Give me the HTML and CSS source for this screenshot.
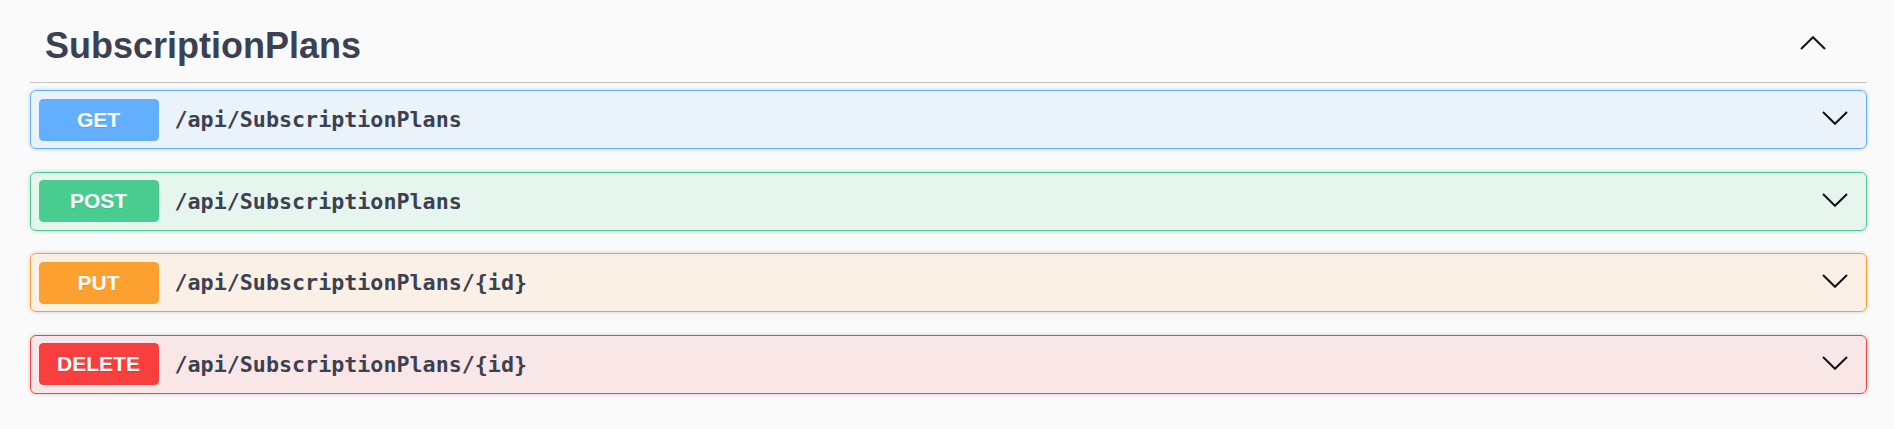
FILE: index.html
```html
<!DOCTYPE html>
<html lang="en">
<head>
<meta charset="utf-8">
<title>SubscriptionPlans</title>
<link rel="stylesheet" href="styles.css">
</head>
<body>
<div class="wrapper">
  <section class="tag-section">
    <div class="tag-header">
      <h4 class="tag-title">SubscriptionPlans</h4>
      <button class="tag-toggle" aria-label="Collapse">
        <svg class="chev" width="26" height="14" viewBox="0 0 26 14"><polyline points="1,13 13,1.2 25,13" fill="none" stroke="#111" stroke-width="2"/></svg>
      </button>
    </div>
    <div class="ops">
      <div class="op op-get">
        <span class="method">GET</span>
        <span class="path">/api/SubscriptionPlans</span>
        <svg class="chev op-chev" width="26" height="14" viewBox="0 0 26 14"><polyline points="1,1 13,12.8 25,1" fill="none" stroke="#111" stroke-width="2"/></svg>
      </div>
      <div class="op op-post">
        <span class="method">POST</span>
        <span class="path">/api/SubscriptionPlans</span>
        <svg class="chev op-chev" width="26" height="14" viewBox="0 0 26 14"><polyline points="1,1 13,12.8 25,1" fill="none" stroke="#111" stroke-width="2"/></svg>
      </div>
      <div class="op op-put">
        <span class="method">PUT</span>
        <span class="path">/api/SubscriptionPlans/{id}</span>
        <svg class="chev op-chev" width="26" height="14" viewBox="0 0 26 14"><polyline points="1,1 13,12.8 25,1" fill="none" stroke="#111" stroke-width="2"/></svg>
      </div>
      <div class="op op-delete">
        <span class="method">DELETE</span>
        <span class="path">/api/SubscriptionPlans/{id}</span>
        <svg class="chev op-chev" width="26" height="14" viewBox="0 0 26 14"><polyline points="1,1 13,12.8 25,1" fill="none" stroke="#111" stroke-width="2"/></svg>
      </div>
    </div>
  </section>
</div>
</body>
</html>
```
FILE: styles.css
```css
html, body {
  margin: 0;
  padding: 0;
  background: #fafafa;
}

.wrapper {
  padding: 9.5px 27px 0 30px;
  font-family: "Liberation Sans", Arial, sans-serif;
}

.tag-header {
  display: flex;
  align-items: center;
  padding: 15px 41px 15px 15px;
  border-bottom: 1px solid rgba(59, 65, 81, 0.3);
}

.tag-title {
  flex: 1;
  margin: 0;
  font-size: 36px;
  line-height: 42px;
  font-weight: bold;
  color: #3b4151;
}

.tag-toggle {
  background: none;
  border: 0;
  padding: 0;
  margin: 0 0 6px 0;
  display: flex;
  cursor: pointer;
}

.chev {
  display: block;
}

.ops {
  padding-top: 7.5px;
}

.op {
  display: flex;
  align-items: center;
  padding: 7.5px 7.5px;
  border: 1px solid;
  border-radius: 6px;
  margin-bottom: 22.5px;
  box-shadow: 0 0 4.5px rgba(0, 0, 0, 0.19);
}

.method {
  min-width: 120px;
  height: 42px;
  display: flex;
  align-items: center;
  justify-content: center;
  border-radius: 4.5px;
  color: #fff;
  font-size: 21px;
  font-weight: bold;
  text-shadow: 0 1px 0 rgba(0, 0, 0, 0.1);
}

.path {
  flex: 1;
  padding: 0 15px 0 16px;
  font-family: "DejaVu Sans Mono", "Liberation Mono", monospace;
  font-weight: bold;
  font-size: 21.7px;
  color: #3b4151;
}

.op-chev {
  margin: 0 11px 3px 0;
}

.op-get { background: rgba(97, 175, 254, 0.1); border-color: #61affe; }
.op-get .method { background: #61affe; }

.op-post { background: rgba(73, 204, 144, 0.1); border-color: #49cc90; }
.op-post .method { background: #49cc90; }

.op-put { background: rgba(252, 161, 48, 0.1); border-color: #fca130; }
.op-put .method { background: #fca130; }

.op-delete { background: rgba(249, 62, 62, 0.1); border-color: #f93e3e; }
.op-delete .method { background: #f93e3e; }
```
